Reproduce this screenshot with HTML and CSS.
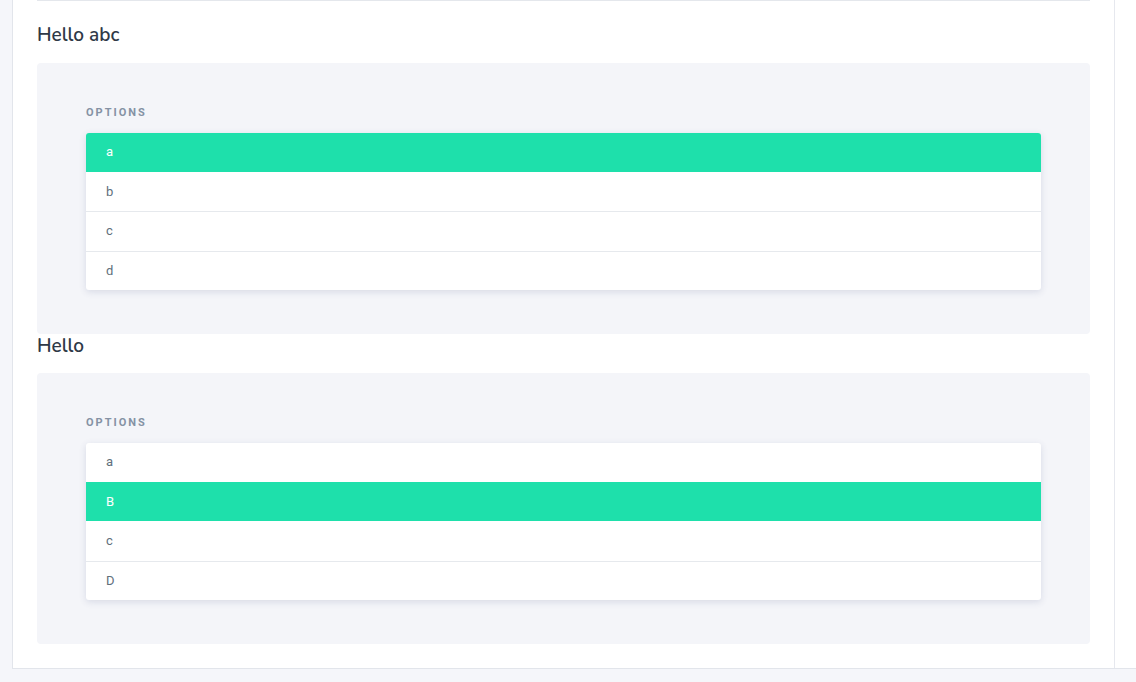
FILE: index.html
```html
<!DOCTYPE html>
<html lang="en">
<head>
    <meta charset="UTF-8">
    <meta name="viewport" content="width=device-width, initial-scale=1.0">
    <title>Options</title>
    <link rel="stylesheet" href="styles.css">
</head>
<body>
    <div class="page">
        <div class="card">
            <div class="main">
                <div class="divider"></div>

                <h2 class="title">Hello abc</h2>
                <div class="panel">
                    <div class="label">Options</div>
                    <ul class="options">
                        <li class="option active">a</li>
                        <li class="option">b</li>
                        <li class="option">c</li>
                        <li class="option">d</li>
                    </ul>
                </div>

                <h2 class="title tight">Hello</h2>
                <div class="panel">
                    <div class="label">Options</div>
                    <ul class="options">
                        <li class="option">a</li>
                        <li class="option active">B</li>
                        <li class="option">c</li>
                        <li class="option">D</li>
                    </ul>
                </div>
            </div>
        </div>
    </div>
</body>
</html>
```

FILE: styles.css
```css
body {
    margin: 0;
    background: #f5f6fa;
    font-family: Roboto, "Liberation Sans", sans-serif;
    overflow: hidden;
}

.page {
    padding: 0 0 13px 12px;
}

.card {
    background: #fff;
    border-left: 1px solid #e2e5eb;
    border-bottom: 1px solid #e2e5eb;
}

.main {
    width: 1053px;
    padding: 0 24px 24px 24px;
    border-right: 1px solid #e6e8ee;
}

.divider {
    height: 1px;
    background: #e4e7ec;
}

.title {
    margin: 22px 0 16px 0;
    font-family: "Nunito", "Open Sans", sans-serif;
    font-size: 19px;
    font-weight: 600;
    line-height: 24px;
    color: #2f3947;
}

.title.tight {
    margin-top: 0;
    margin-bottom: 15px;
}

.panel {
    background: #f4f5f9;
    border-radius: 4px;
    padding: 40px 49px 44px 49px;
}

.label {
    font-size: 11px;
    font-weight: 700;
    letter-spacing: 2px;
    line-height: 20px;
    text-transform: uppercase;
    color: #8592a4;
    margin-bottom: 10px;
}

.options {
    list-style: none;
    margin: 0;
    padding: 0;
    background: #fff;
    border-radius: 3px;
    box-shadow: 0 2px 7px rgba(70, 80, 130, 0.16);
    overflow: hidden;
}

.option {
    padding: 10px 20px;
    line-height: 18.5px;
    font-size: 13px;
    color: #606f7b;
    border-top: 1px solid #e6e9ed;
}

.option:first-child {
    border-top: none;
}

.option.active {
    background: #1ee0ab;
    color: #fff;
    border-top-color: #1ee0ab;
}

.option.active + .option {
    border-top-color: transparent;
}
```
